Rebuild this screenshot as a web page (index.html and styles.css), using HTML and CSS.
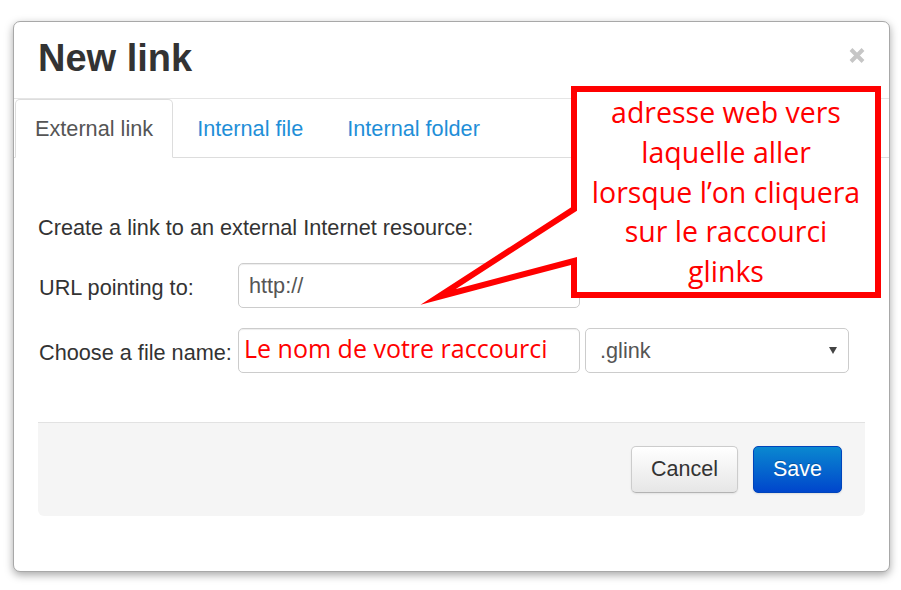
FILE: index.html
```html
<!DOCTYPE html>
<html lang="fr">
<head>
<meta charset="utf-8">
<title>New link</title>
<link rel="stylesheet" href="styles.css">
</head>
<body>
<div class="modal">
  <div class="modal-header">
    <h3 class="modal-title">New link</h3>
    <button class="close" type="button" aria-label="Close">
      <svg width="16" height="15" viewBox="0 0 16 15"><path d="M2 1.5 L14 13.5 M14 1.5 L2 13.5" stroke="#c6c6c6" stroke-width="4" fill="none"/></svg>
    </button>
  </div>
  <ul class="tabs">
    <li><a class="tab active">External link</a></li>
    <li><a class="tab">Internal file</a></li>
    <li><a class="tab">Internal folder</a></li>
  </ul>
  <div class="modal-body">
    <p class="intro">Create a link to an external Internet resource:</p>
    <div class="form-row">
      <label class="form-label">URL pointing to:</label>
      <div class="field">http://</div>
    </div>
    <div class="form-row row-second">
      <label class="form-label">Choose a file name:</label>
      <div class="field field-note"><span class="note-text">Le nom de votre raccourci</span></div>
      <div class="select"><span>.glink</span><span class="caret"></span></div>
    </div>
    <div class="modal-footer">
      <button class="btn btn-default" type="button">Cancel</button>
      <button class="btn btn-primary" type="button">Save</button>
    </div>
  </div>
</div>

<svg class="callout-shape" width="901" height="590" viewBox="0 0 901 590">
  <path d="M574 89 H878 V295 H574 V261 L438 297 L574 209 Z" fill="#ffffff" stroke="#ff0000" stroke-width="6" stroke-linejoin="miter" stroke-miterlimit="20"/>
</svg>
<div class="callout-text">adresse web vers<br>laquelle aller<br>lorsque l’on cliquera<br>sur le raccourci<br>glinks</div>
</body>
</html>
```

FILE: styles.css
```css
* { box-sizing: border-box; }

html, body {
  margin: 0;
  padding: 0;
  background: #ffffff;
}

body {
  font-family: "Liberation Sans", Arial, sans-serif;
  font-size: 21.7px;
  line-height: 29px;
  color: #333333;
  position: relative;
  width: 901px;
  height: 590px;
  overflow: hidden;
}

.modal {
  margin: 21px 0 0 13px;
  width: 877px;
  border: 1px solid #a8a8a8;
  border-radius: 7px;
  background: #ffffff;
  box-shadow: 0 3px 8px rgba(0, 0, 0, 0.35);
}

.modal-header {
  display: flex;
  align-items: flex-start;
  padding: 16px 24px 18px 24px;
  border-bottom: 1px solid #e5e5e5;
}

.modal-title {
  margin: 0;
  font-size: 38px;
  line-height: 41.8px;
  font-weight: bold;
  color: #333333;
}

.close {
  margin-left: auto;
  margin-top: 10px;
  padding: 0;
  border: 0;
  background: transparent;
  width: 16px;
  height: 15px;
  display: block;
}

.close svg { display: block; }

.tabs {
  display: flex;
  margin: 0;
  padding: 0 0 0 1px;
  list-style: none;
  border-bottom: 1px solid #dddddd;
}

.tab {
  display: block;
  padding: 14px 19px;
  margin-right: 4px;
  margin-bottom: -1px;
  line-height: 29px;
  border: 1px solid transparent;
  border-radius: 5px 5px 0 0;
  color: #1f8fd8;
  cursor: pointer;
}

.tab.active {
  color: #555555;
  background: #ffffff;
  border-color: #dddddd #dddddd transparent;
}

.modal-body {
  padding: 55px 24px 55px 24px;
}

.intro {
  margin: 0 0 21px;
}

.form-row {
  display: flex;
  align-items: center;
  height: 45px;
}

.row-second {
  margin-top: 20px;
}

.form-label {
  width: 200px;
  padding-left: 1px;
  padding-top: 5px;
  flex-shrink: 0;
}

.field {
  width: 342px;
  height: 45px;
  border: 1px solid #cccccc;
  border-radius: 5px;
  box-shadow: inset 0 1px 1px rgba(0, 0, 0, 0.075);
  padding: 0 10px;
  display: flex;
  align-items: center;
  color: #555555;
}

.field-note {
  padding: 0 5px;
  align-items: flex-start;
}

.note-text {
  display: block;
  font-family: "Open Sans", "Noto Sans", sans-serif;
  font-size: 25px;
  line-height: 34px;
  margin-top: 2px;
  color: #ff0000;
  white-space: nowrap;
}

.select {
  width: 264px;
  height: 45px;
  margin-left: 5px;
  border: 1px solid #cccccc;
  border-radius: 5px;
  padding: 0 11px 0 14px;
  display: flex;
  align-items: center;
  justify-content: space-between;
  color: #555555;
}

.caret {
  width: 0;
  height: 0;
  border-left: 4px solid transparent;
  border-right: 4px solid transparent;
  border-top: 7px solid #444444;
}

.modal-footer {
  margin-top: 49px;
  border-top: 1px solid #e2e2e2;
  background: #f5f5f5;
  border-radius: 0 0 6px 6px;
  padding: 23px 23px 23px;
  display: flex;
  justify-content: flex-end;
  gap: 15px;
}

.btn {
  height: 47px;
  padding: 0 19px;
  font-family: "Liberation Sans", Arial, sans-serif;
  font-size: 21.5px;
  line-height: 29px;
  border-radius: 5px;
  cursor: pointer;
}

.btn-default {
  color: #333333;
  background: linear-gradient(#ffffff, #e6e6e6);
  border: 1px solid #cccccc;
  border-bottom-color: #b3b3b3;
  box-shadow: 0 1px 2px rgba(0, 0, 0, 0.08);
}

.btn-primary {
  color: #ffffff;
  background: linear-gradient(#0a88d0, #0046cc);
  border: 1px solid #0044bb;
  text-shadow: 0 -1px 0 rgba(0, 0, 0, 0.25);
  box-shadow: 0 1px 2px rgba(0, 0, 0, 0.1);
}

.callout-shape {
  position: absolute;
  left: 0;
  top: 0;
  pointer-events: none;
}

.callout-text {
  position: absolute;
  left: 571px;
  top: 93px;
  width: 310px;
  text-align: center;
  font-family: "Open Sans", "Noto Sans", sans-serif;
  font-size: 28.5px;
  line-height: 39.75px;
  color: #ff0000;
}
```
